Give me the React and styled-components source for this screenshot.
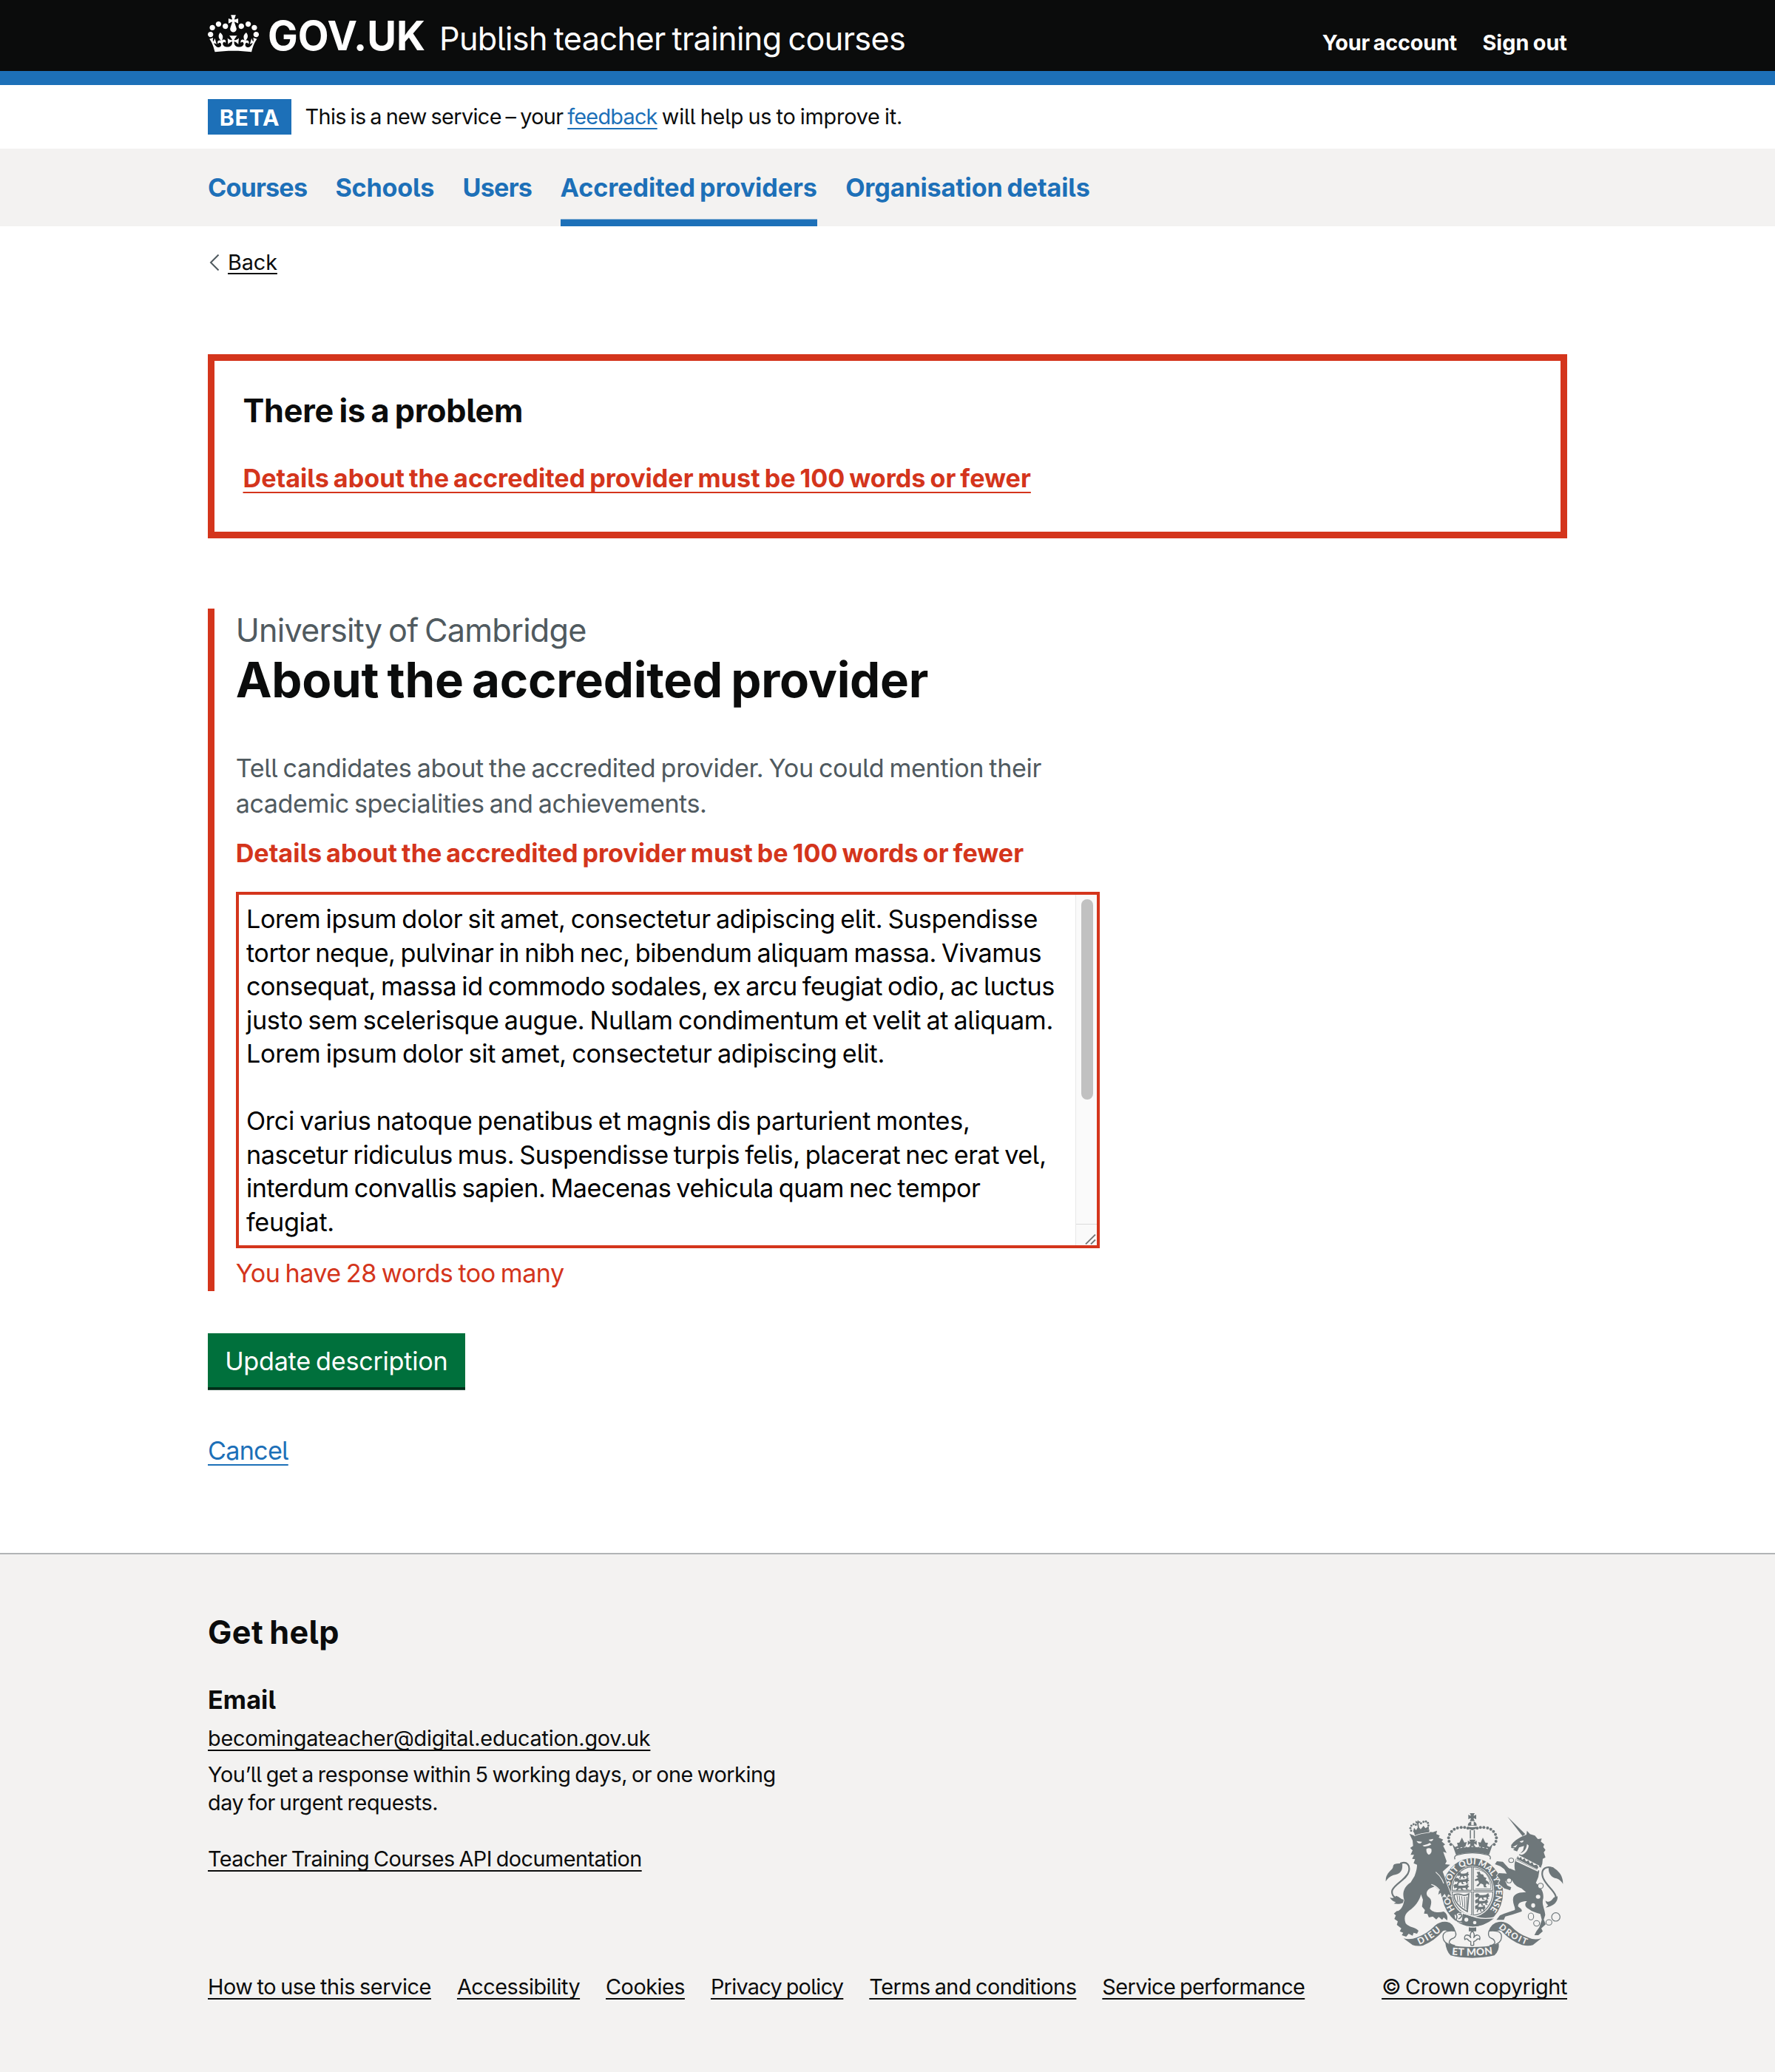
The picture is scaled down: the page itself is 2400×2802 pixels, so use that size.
import React from "react";
import styled, { createGlobalStyle, css } from "styled-components";

const colour = {
  ink: "#0b0c0c",
  blue: "#1d70b8",
  red: "#d4351c",
  green: "#00703c",
  greenShadow: "#002d18",
  secondary: "#505a5f",
  panel: "#f3f2f1",
  rule: "#b1b4b6",
  crest: "#6e777a",
};

const GlobalStyle = createGlobalStyle`
  *, *::before, *::after { box-sizing: border-box; }
  body {
    margin: 0;
    background: #fff;
    color: ${colour.ink};
    font-family: Inter, Roboto, "Liberation Sans", sans-serif;
    font-feature-settings: "cv05";
    -webkit-font-smoothing: antialiased;
  }
  h1, h2, h3, p, ul { margin: 0; padding: 0; }
`;

/* Letter spacing, in px, set per piece of text */
const tracked = css`
  letter-spacing: ${(p) => p.$track || 0}px;
  word-spacing: -0.06em;
  white-space: nowrap;
`;

const Container = styled.div`
  width: 1838px;
  margin: 0 auto;
`;

/* ---------- Header ---------- */
const HeaderBar = styled.header`
  height: 115px;
  background: ${colour.ink};
  border-bottom: 19px solid ${colour.blue};
  color: #fff;
`;
const HeaderRow = styled(Container)`
  display: flex;
  align-items: flex-start;
`;
const Crown = styled.svg`
  width: 69px;
  height: 51px;
  margin-top: 20px;
  flex: none;
`;
const LogoText = styled.span`
  ${tracked}
  width: 214px;
  margin: 18px 0 0 12px;
  font-size: 54.3px;
  line-height: 60px;
  font-weight: 700;
`;
const ServiceName = styled.span`
  ${tracked}
  margin: 24px 0 0 18px;
  font-size: 43.2px;
  line-height: 57px;
`;
const AccountNav = styled.nav`
  display: flex;
  gap: 34.5px;
  margin: 38px 0 0 auto;
`;
const AccountLink = styled.a`
  ${tracked}
  font-size: 28.8px;
  line-height: 39px;
  font-weight: 700;
`;

/* ---------- Phase banner ---------- */
const Phase = styled(Container)`
  display: flex;
  height: 86px;
  padding-top: 19px;
`;
const Tag = styled.strong`
  ${tracked}
  width: 113px;
  height: 48px;
  padding-top: 1px;
  margin-right: 18.5px;
  background: ${colour.blue};
  color: #fff;
  font-size: 30.2px;
  line-height: 48px;
  text-align: center;
`;
const PhaseText = styled.p`
  font-size: 28.8px;
  line-height: 48px;
`;
const Phrase = styled.span`
  ${tracked}
`;

/* ---------- Links ---------- */
const Link = styled.a`
  color: ${(p) => p.$tone || colour.ink};
  text-decoration: underline;
  text-decoration-thickness: 2px;
  text-underline-offset: ${(p) => p.$drop || 5}px;
  text-decoration-skip-ink: none;
`;

/* ---------- Primary navigation ---------- */
const NavBar = styled.nav`
  background: ${colour.panel};
`;
const NavList = styled(Container)`
  display: flex;
  gap: 38.3px;
`;
const NavItem = styled.a`
  ${tracked}
  height: 105px;
  color: ${colour.blue};
  font-size: 34.2px;
  line-height: 105px;
  font-weight: 700;
  box-shadow: ${(p) => (p.$current ? `inset 0 -9.5px 0 ${colour.blue}` : "none")};
`;

/* ---------- Main ---------- */
const BackRow = styled.div`
  display: flex;
  align-items: center;
  height: 40px;
  margin-top: 28.5px;
`;
const Chevron = styled.svg`
  width: 14px;
  height: 24px;
  margin: 1px 11.5px 0 1.5px;
`;
const BackLink = styled(Link)`
  ${tracked}
  font-size: 28.8px;
  line-height: 40px;
`;
const ErrorSummary = styled.section`
  height: 249px;
  margin-top: 104.5px;
  padding: 38px 38.5px 0;
  border: 9.6px solid ${colour.red};
`;
const SummaryTitle = styled.h2`
  ${tracked}
  font-size: 43.2px;
  line-height: 58px;
`;
const SummaryItem = styled.p`
  ${tracked}
  margin-top: 38.7px;
  font-size: 34.2px;
  line-height: 48px;
  font-weight: 700;
`;
const FormGroup = styled.div`
  height: 922.5px;
  margin-top: 95.3px;
  padding: 1px 0 0 28.7px;
  border-left: 9.6px solid ${colour.red};
`;
const Caption = styled.span`
  ${tracked}
  display: block;
  color: ${colour.secondary};
  font-size: 43.2px;
  line-height: 57px;
`;
const Title = styled.h1`
  ${tracked}
  font-size: 65.4px;
  line-height: 77px;
`;
const Hint = styled.div`
  margin-top: 57px;
  color: ${colour.secondary};
  font-size: 34.2px;
  line-height: 48px;
`;
const Line = styled.div`
  ${tracked}
  min-height: 1lh;
`;
const ErrorMessage = styled.p`
  ${tracked}
  margin-top: 18.3px;
  color: ${colour.red};
  font-size: 34.2px;
  line-height: 48px;
  font-weight: 700;
`;
const TextBox = styled.div`
  display: flex;
  justify-content: space-between;
  width: 1168px;
  height: 482px;
  margin-top: 28.8px;
  border: 4px solid ${colour.red};
`;
const TextContent = styled.div`
  padding: 10px 0 0 10.3px;
  color: #000;
  font-size: 34.2px;
  line-height: 45.5px;
`;
const Track = styled.div`
  display: flex;
  flex-direction: column;
  justify-content: space-between;
  width: 29px;
  background: #fafafa;
  border-left: 1.5px solid #e8e8e8;
`;
const Thumb = styled.div`
  width: 16px;
  height: 271px;
  margin: 5.5px 0 0 7px;
  border-radius: 8px;
  background: #c1c1c1;
`;
const Corner = styled.div`
  height: 29px;
  padding: 13px 0 0 12px;
  border-top: 1.5px solid #dcdcdc;
  line-height: 0;
`;
const WordCount = styled.p`
  ${tracked}
  margin-top: 10px;
  color: ${colour.red};
  font-size: 34.2px;
  line-height: 48px;
`;
const Button = styled.button`
  ${tracked}
  display: block;
  width: 347.5px;
  height: 73px;
  margin: 57.4px 0 62px;
  padding: 2px 0 0;
  border: 0;
  background: ${colour.green};
  box-shadow: 0 3.8px 0 ${colour.greenShadow};
  color: #fff;
  font-family: inherit;
  font-feature-settings: inherit;
  font-size: 34.2px;
  line-height: 71px;
`;
const CancelLink = styled(Link)`
  ${tracked}
  display: block;
  width: max-content;
  font-size: 34.2px;
  line-height: 48px;
`;

/* ---------- Footer ---------- */
const FooterBar = styled.footer`
  height: 702px;
  margin-top: 114px;
  padding-top: 76.5px;
  background: ${colour.panel};
  border-top: 2px solid ${colour.rule};
`;
const FooterRow = styled(Container)`
  display: flex;
  justify-content: space-between;
  align-items: flex-end;
  font-size: 28.8px;
  line-height: 38.3px;
`;
const FooterTitle = styled.h2`
  ${tracked}
  font-size: 43.2px;
  line-height: 57px;
`;
const FooterSubtitle = styled.h3`
  ${tracked}
  margin: 39px 0 9.3px;
  font-size: 34.2px;
  line-height: 48px;
`;
const Response = styled.div`
  margin: 10.3px 0 38px;
`;
const FooterLinks = styled.div`
  display: flex;
  gap: 35px;
  margin-top: 134.5px;
`;
const Copyright = styled.div`
  display: flex;
  flex-direction: column;
  align-items: flex-end;
`;
const Crest = styled.svg`
  width: 250px;
  height: 203.33px;
  margin: 0 -1px 16.5px 0;
`;

const CrownMark = () => (
  <Crown viewBox="0 0 132 97" fill="#fff" aria-hidden="true">
    <path
      fillRule="evenodd"
      d="M25 30.2c3.5 1.5 7.7-.2 9.1-3.7 1.5-3.6-.2-7.8-3.9-9.2-3.6-1.4-7.6.3-9.1 3.9-1.4 3.5.3 7.5 3.9 9zM9 39.5c3.6 1.5 7.8-.2 9.2-3.7 1.5-3.6-.2-7.8-3.9-9.1-3.6-1.5-7.6.2-9.1 3.8-1.4 3.5.3 7.5 3.8 9zM4.4 57.2c3.5 1.5 7.7-.2 9.1-3.8 1.5-3.6-.2-7.7-3.9-9.1-3.5-1.5-7.6.3-9.1 3.8-1.4 3.5.3 7.6 3.9 9.1zm38.3-21.4c3.5 1.5 7.7-.2 9.1-3.8 1.5-3.6-.2-7.7-3.9-9.1-3.6-1.5-7.6.3-9.1 3.8-1.3 3.6.4 7.7 3.9 9.1zm64.4-5.6c-3.6 1.5-7.8-.2-9.1-3.7-1.5-3.6.2-7.8 3.8-9.2 3.6-1.4 7.7.3 9.2 3.9 1.3 3.5-.4 7.5-3.9 9zm15.9 9.3c-3.6 1.5-7.7-.2-9.1-3.7-1.5-3.6.2-7.8 3.7-9.1 3.6-1.5 7.7.2 9.2 3.8 1.5 3.5-.3 7.5-3.8 9zm4.7 17.7c-3.6 1.5-7.8-.2-9.2-3.8-1.5-3.6.2-7.7 3.9-9.1 3.6-1.5 7.7.3 9.2 3.8 1.3 3.5-.4 7.6-3.9 9.1zM89.3 35.8c-3.6 1.5-7.8-.2-9.2-3.8-1.4-3.6.2-7.7 3.9-9.1 3.6-1.5 7.7.3 9.2 3.8 1.4 3.6-.3 7.7-3.9 9.1zM69.7 17.7l8.9 4.7V9.3l-8.9 2.8c-.2-.3-.5-.6-.9-.9L72.4 0H59.6l3.5 11.2c-.3.3-.6.5-.9.9l-8.8-2.8v13.1l8.8-4.7c.3.3.6.7.9.9l-5 15.4v.1c-.2.8-.4 1.6-.4 2.4 0 4.1 3.1 7.5 7 8.1h.2c.3 0 .7.1 1 .1.4 0 .7 0 1-.1h.2c4-.6 7.1-4.1 7.1-8.1 0-.8-.1-1.7-.4-2.4V34l-5.1-15.4c.4-.2.7-.6 1-.9zM66 92.8c16.9 0 32.8 1.1 47.1 3.2 4-16.9 8.9-26.7 14-33.5l-9.6-3.4c1 4.9 1.1 7.2 0 10.2-1.5-1.4-3-4.3-4.2-8.7L108.6 76c2.8-2 5-3.2 7.5-3.3-4.4 9.4-10 11.9-13.6 11.2-4.3-.8-6.3-4.6-5.6-7.9 1-4.7 5.7-5.9 8-.5 4.3-8.7-3-11.4-7.6-8.8 7.1-7.2 7.9-13.5 2.1-21.1-8 6.1-8.1 12.3-4.5 20.8-4.7-5.4-12.1-2.5-9.5 6.2 3.4-5.2 7.9-2 7.2 3.1-.6 4.3-6.4 7.8-13.5 7.2-10.3-.9-10.9-8-11.2-13.8 2.5-.5 7.1 1.8 11 7.3L80.2 60c-4.1 4.4-8 5.3-12.3 5.4 1.4-4.4 8-11.6 8-11.6H55.5s6.4 7.2 7.9 11.6c-4.2-.1-8-1-12.3-5.4l1.4 16.4c3.9-5.5 8.5-7.7 10.9-7.3-.3 5.8-.9 12.8-11.1 13.8-7.2.6-12.9-2.9-13.5-7.2-.7-5 3.8-8.3 7.1-3.1 2.7-8.7-4.6-11.6-9.4-6.2 3.7-8.5 3.6-14.7-4.6-20.8-5.8 7.6-5 13.9 2.2 21.1-4.7-2.6-11.9.1-7.7 8.8 2.3-5.5 7.1-4.2 8.1.5.7 3.3-1.3 7.1-5.7 7.9-3.5.7-9-1.8-13.5-11.2 2.5.1 4.7 1.3 7.5 3.3l-4.7-15.4c-1.2 4.4-2.7 7.2-4.3 8.7-1.1-3-.9-5.3 0-10.2l-9.5 3.4c5 6.9 9.9 16.7 14 33.5 14.8-2.1 30.8-3.2 47.7-3.2z"
    />
  </Crown>
);

const crownBeads = [
  [404, 128], [391, 125], [377, 125], [362, 127], [349, 132], [338, 141], [330, 153],
  [326, 167], [328, 181], [335, 194],
];

const lionCrownBeads = [
  [174, 138], [171, 128], [175, 118], [184, 112], [193, 114], [214, 108], [224, 102],
  [234, 101], [242, 107], [244, 117], [242, 127],
];

const PassantLion = ({ x, y, w = 66 }) => (
  <path
    transform={`translate(${x} ${y}) scale(${w / 66} 1)`}
    d="M0 6l8-5 8 2 4 5 14 0 12-1 8-6 6 3-4 3 6 5-6 4-2 6 6 1-2 2-9-1-2-7-12 1 1 6 5 1-1 2-9 0-3-8-7 1-5 6 3 3-8 0-1-4 5-7-5-2-7 3z"
  />
);

const RoyalCrest = () => {
  const g = colour.crest;
  const l = colour.panel;
  const cut = { stroke: l, strokeWidth: 5, paintOrder: "stroke", strokeLinejoin: "round" };
  return (
    <Crest viewBox="60 55 750 610" role="img" aria-label="Royal coat of arms">
      <defs>
        <path id="garter" d="M356 463A95 110 0 1 1 490 463" />
        <path id="dieu" d="M207 601Q262 578 304 536" />
        <path id="mon" d="M336 641Q422 650 512 638" />
        <path id="droit" d="M528 532Q580 580 645 602" />
      </defs>

      {/* Garter and shield */}
      <ellipse cx="423" cy="388" rx="124" ry="139" fill={g} />
      <ellipse cx="423" cy="384" rx="88" ry="103" fill={l} />
      <ellipse cx="423" cy="383" rx="83" ry="98" fill="none" stroke={g} strokeWidth="3.5" />
      <text fill={l} fontFamily="Lato, sans-serif" fontWeight="900" fontSize="35">
        <textPath href="#garter" startOffset="6" textLength="480" lengthAdjust="spacingAndGlyphs">HONI SOIT QUI MAL Y PENSE</textPath>
      </text>
      <path d="M423 285V481M339 383H507" stroke={g} strokeWidth="10" />
      <path d="M423 285V481M339 383H507" stroke={l} strokeWidth="3" />
      <g fill={g}>
        <PassantLion x={362} y={304} w={50} />
        <PassantLion x={350} y={328} w={64} />
        <PassantLion x={346} y={353} w={68} />
        <PassantLion x={433} y={391} w={64} />
        <PassantLion x={433} y={415} w={58} />
        <PassantLion x={433} y={439} w={46} />
        <path d="M440 306L452 304L456 314L466 316L470 326L480 330L476 338L488 346L492 358L480 352L476 360L482 368H470L466 356L456 352L446 364L438 362L450 350L446 340L434 342L432 336L446 330L438 322L446 318z" />
      </g>
      <g fill="none" stroke={g}>
        <path d="M434 374H498Q498 340 478 312Q460 296 434 294" strokeWidth="2.5" />
        <path d="M348 398Q350 440 402 466L408 394Q392 404 378 398Q364 392 348 398z" strokeWidth="5" />
        <path d="M360 400L364 428M369 401L374 440M379 404L384 448M390 406L392 454M400 406L399 458" strokeWidth="3" />
      </g>
      {/* Buckle and belt end */}
      <path d="M350 480L376 464L402 480L386 514L356 508z" fill={l} />
      <path d="M378 472Q362 464 356 478Q364 486 356 500Q366 512 382 504M366 478Q378 474 380 484Q376 492 366 496" fill="none" stroke={g} strokeWidth="5" />
      <path d="M384 474L440 492Q470 500 510 494Q470 527 423 527L378 512z" fill={g} />
      <path d="M384 472L440 490Q474 498 514 490" fill="none" stroke={l} strokeWidth="4" />
      <circle cx="398" cy="499" r="8" fill={l} />
      <circle cx="432" cy="511" r="7" fill={l} />
      <path d="M408 530Q423 533 438 530V546H408z" fill={g} />
      <path
        d="M422 544Q410 558 416 572Q408 558 396 562Q388 568 392 580Q400 572 408 584L416 588L416 602Q422 606 428 602L428 588L436 584Q446 572 452 580Q456 566 446 562Q436 558 428 572Q434 558 422 544z"
        fill={l} stroke={g} strokeWidth="4" strokeLinejoin="round"
      />

      {/* Tails */}
      <g fill="none" stroke={g} strokeWidth="6.5" strokeLinecap="round">
        <path d="M132 270C158 262 170 278 165 302C158 334 112 350 98 378C92 396 104 410 118 414" />
        <path d="M748 290C722 280 703 292 706 318C710 352 752 376 760 402C762 414 757 420 752 426" />
      </g>
      <g fill={g}>
        <path d="M71 344C70 318 84 306 96 294C104 286 98 280 106 274C116 270 128 270 138 272C140 292 136 310 112 316C96 318 80 328 71 344z" />
        <path d="M88 409C98 414 106 410 113 402L122 406C132 414 142 420 154 418C144 434 126 438 104 434L112 428C102 426 94 420 88 409z" />
        <path d="M790 354C790 322 776 304 752 288C746 284 738 286 732 290C730 310 742 328 764 332C776 336 784 344 790 354z" />
        <path d="M768 404C770 428 752 444 720 450L730 440C724 436 720 430 719 422C732 432 742 424 752 410z" />
      </g>

      {/* Lion */}
      <path
        {...cut}
        fill={g}
        d="M167 150L186 158C206 146 240 142 262 144L279 138L276 152L290 158L286 166L304 174L298 182L312 194L304 200L318 228L304 224L318 262L312 274L332 276L322 286L302 304L310 326L318 352L328 378L338 404L324 396L320 412L310 394L298 408L294 390L284 398L288 380L270 364L250 372C232 384 234 400 246 408C262 420 254 440 250 454C260 470 284 472 306 466C318 472 324 486 320 502L306 490L300 500L286 488L276 498L262 486L246 490L240 476L226 474L230 460L218 446L222 418L214 396C208 422 190 446 166 462C148 476 144 492 152 514C168 532 190 528 204 544L198 556L184 552L180 564L164 556L154 568L136 562L142 552L128 546L134 534L116 520L120 506L106 496L112 482L104 474L116 464C130 464 142 446 146 420C136 390 146 364 172 348L188 322C196 300 198 288 198 276L184 270L190 254L178 252L186 236L172 236L180 218L170 208L182 200L180 178z"
      />
      <g fill={l}>
        <path d="M196 180L218 183C213 193 201 191 196 180z" />
        <path d="M245 175L264 171C262 181 252 184 245 175z" />
        <path d="M220 198Q238 196 250 188L256 194Q242 204 226 202z" />
        <path d="M236 212Q246 206 256 212Q260 230 246 236Q234 230 236 212z" />
      </g>
      <path d="M274 306Q298 326 306 352M256 356Q276 362 290 380" fill="none" stroke={l} strokeWidth="3.5" />
      {/* Lion's crown */}
      <path d="M186 145L248 133L247 144Q214 147 189 157z" fill={g} stroke={l} strokeWidth="5" paintOrder="stroke" />
      <g fill={g}>
        {lionCrownBeads.map(([x, y]) => (
          <circle key={`${x}-${y}`} cx={x} cy={y} r="4.4" />
        ))}
        <path d="M192 98L199 102L201 95L206 101L212 100L209 106L204 108L206 124L202 130L198 108L192 106z" />
        <path d="M182 142L186 126L194 136L203 122L213 132L224 118L232 128L244 122L246 134L188 148z" />
      </g>

      {/* Unicorn */}
      <g fill={g} {...cut}>
        <path d="M604 244C594 260 590 280 596 300L568 288L546 264L522 262L514 274L536 282L552 294L562 312L530 310L522 320L536 338L528 352L552 372L576 380L580 368L564 360L556 342L584 340C590 354 602 366 622 372L640 388C610 386 590 396 588 412C584 436 600 452 594 460L552 474L534 482L520 500H550L556 486L586 478L622 466C626 458 618 454 608 446C606 432 620 424 644 424C632 436 636 448 652 456C664 466 680 470 698 476L704 500L694 530L682 546L674 562H690L708 546L702 534L720 518L712 498L718 480C716 454 702 436 710 412C712 392 706 372 680 350L690 326L694 300z" />
      </g>
      <g fill={g}>
        <path d="M565 81L637 152L626 160z" />
        <path d="M580 196C590 180 606 170 622 162L642 154L644 138L656 152L676 158L688 172L704 170L700 182L714 194L710 204L719 216L712 226L719 246L708 252L706 272L700 288L610 238L628 218L632 200L612 206L604 222L588 216L594 210L580 208z" />
      </g>
      <g fill={l}>
        <path d="M614 182L630 177C630 187 619 189 614 182z" />
        <path d="M644 192L651 198C648 220 634 236 618 236L612 230C632 228 642 212 644 192z" />
        <path d="M586 204L606 194L598 206z" />
        <path d="M606 234L694 280L688 304L598 262z" />
      </g>
      <path d="M606 240L612 250L620 244L624 256L634 250L640 263L650 258L656 271L666 266L671 278L684 276L690 286L684 297L602 257z" fill={g} />
      <path d="M602 253L688 297" stroke={l} strokeWidth="2.5" />
      {/* Chain */}
      <g fill="none" stroke={g} strokeWidth="3.2">
        <ellipse cx="580" cy="258" rx="10" ry="9" fill={l} />
        <ellipse cx="571" cy="340" rx="10" ry="10" fill={l} />
        <ellipse cx="699" cy="362" rx="11" ry="11" fill={l} />
        <ellipse cx="660" cy="486" rx="11" ry="14" />
        <ellipse cx="683" cy="514" rx="12" ry="11" />
        <ellipse cx="733" cy="510" rx="12" ry="11" />
        <circle cx="761" cy="488" r="17" strokeWidth="3.6" />
      </g>
      <g fill={l}>
        <ellipse cx="576" cy="284" rx="7" ry="8" />
        <ellipse cx="689" cy="406" rx="9" ry="8" />
        <ellipse cx="669" cy="441" rx="8" ry="9" />
      </g>

      {/* Royal crown */}
      <g fill={g}>
        <path d="M412 67H432L427 77H431L438 73V92L431 88H427L432 99H412L417 88H413L406 92V73L413 77H417z" />
        <path d="M404 118Q404 104 418 101V116H428V101Q440 104 440 118z" />
        <path d="M404 122Q422 126 440 122Q438 134 422 136Q406 134 404 122z" />
        <rect x="412" y="136" width="4.5" height="34" />
        <rect x="428" y="136" width="4.5" height="34" />
        {crownBeads.map(([x, y]) => (
          <React.Fragment key={x + "-" + y}>
            <circle cx={x} cy={y} r="6" />
            <circle cx={846 - x} cy={y} r="6" />
          </React.Fragment>
        ))}
        <path d="M340 190L352 204L364 200L360 188L370 186L380 166L390 186L400 184L394 202L404 206L414 198V190L404 196V178L414 184L410 174H436L430 184L440 178V196L430 190V198L442 206L450 202L446 184L456 186L465 166L475 186L486 188L482 200L492 204L506 190L490 236Q422 218 356 236z" />
      </g>
      <path d="M359 211Q422 194 487 211" fill="none" stroke={l} strokeWidth="3" strokeDasharray="8 7" />
      <path d="M352 258Q346 240 360 236Q422 222 486 236Q500 240 494 258Q422 232 352 258z" fill={l} />
      <path d="M352 254Q346 242 360 237Q422 219 486 237Q500 242 494 254" fill="none" stroke={g} strokeWidth="4" />

      {/* Motto ribbon */}
      <g fill={g}>
        <path d="M143 575Q170 582 196 572Q240 556 270 524Q292 504 320 508Q344 512 354 546L328 552Q318 538 304 544Q270 584 222 604Q196 608 180 602z" />
        <path d="M703 574Q676 584 650 572Q606 556 578 524Q556 504 530 508Q500 512 488 546L514 552Q526 538 540 544Q576 584 624 602Q650 608 668 602z" />
        <path d="M312 588Q330 604 372 608Q422 612 474 608Q512 604 530 596Q532 626 512 644Q470 654 422 654Q370 654 334 644Q316 626 312 588z" />
      </g>
      <g fill={l} stroke={g} strokeWidth="4">
        <path d="M352 545Q362 566 346 574Q330 578 328 592Q336 602 352 604Q316 602 306 582Q298 560 312 550Q322 542 352 545z" />
        <path d="M490 545Q482 566 498 574Q512 578 514 592Q508 602 492 604Q528 602 538 582Q546 560 532 550Q520 542 490 545z" />
      </g>
      <g fill={l} fontFamily="Lato, sans-serif" fontWeight="900">
        <text fontSize="37"><textPath href="#dieu" textLength="106">DIEU</textPath></text>
        <text fontSize="41"><textPath href="#mon" startOffset="3" textLength="166">ET MON</textPath></text>
        <text fontSize="35"><textPath href="#droit" textLength="132">DROIT</textPath></text>
      </g>
    </Crest>
  );
};

const navItems = [
  { label: "Courses", track: -0.85 },
  { label: "Schools", track: -0.26 },
  { label: "Users", track: -0.75 },
  { label: "Accredited providers", track: -0.09, current: true },
  { label: "Organisation details", track: -0.17 },
];

const paragraphs = [
  ["Lorem ipsum dolor sit amet, consectetur adipiscing elit. Suspendisse", -0.35],
  ["tortor neque, pulvinar in nibh nec, bibendum aliquam massa. Vivamus", -0.47],
  ["consequat, massa id commodo sodales, ex arcu feugiat odio, ac luctus", -0.46],
  ["justo sem scelerisque augue. Nullam condimentum et velit at aliquam.", -0.31],
  ["Lorem ipsum dolor sit amet, consectetur adipiscing elit.", -0.3],
  ["", 0],
  ["Orci varius natoque penatibus et magnis dis parturient montes,", -0.32],
  ["nascetur ridiculus mus. Suspendisse turpis felis, placerat nec erat vel,", -0.46],
  ["interdum convallis sapien. Maecenas vehicula quam nec tempor", -0.5],
  ["feugiat.", -0.3],
];

const footerLinks = [
  ["How to use this service", -0.39],
  ["Accessibility", -0.5],
  ["Cookies", -0.5],
  ["Privacy policy", -0.7],
  ["Terms and conditions", -0.48],
  ["Service performance", -0.59],
];

export default function App() {
  return (
    <>
      <GlobalStyle />
      <HeaderBar>
        <HeaderRow>
          <CrownMark />
          <LogoText $track={0.1}>GOV.UK</LogoText>
          <ServiceName $track={-0.63}>Publish teacher training courses</ServiceName>
          <AccountNav>
            <AccountLink $track={-0.23}>Your account</AccountLink>
            <AccountLink $track={0.07}>Sign out</AccountLink>
          </AccountNav>
        </HeaderRow>
      </HeaderBar>

      <Phase>
        <Tag $track={0.8}>BETA</Tag>
        <PhaseText>
          <Phrase $track={-0.61}>This is a new service – your </Phrase>
          <Phrase $track={-0.74}><Link $tone={colour.blue}>feedback</Link></Phrase>
          <Phrase $track={-0.19}> will help us to improve it.</Phrase>
        </PhaseText>
      </Phase>

      <NavBar>
        <NavList>
          {navItems.map((item) => (
            <NavItem key={item.label} $track={item.track} $current={item.current}>
              {item.label}
            </NavItem>
          ))}
        </NavList>
      </NavBar>

      <Container as="main">
        <BackRow>
          <Chevron viewBox="0 0 14 24" fill="none" stroke={colour.secondary} strokeWidth="2">
            <path d="M12.5 1.5L2 12L12.5 22.5" />
          </Chevron>
          <BackLink $track={-0.1} $drop={4}>Back</BackLink>
        </BackRow>

        <ErrorSummary>
          <SummaryTitle $track={-0.22}>There is a problem</SummaryTitle>
          <SummaryItem $track={-0.03}>
            <Link $tone={colour.red} $drop={6}>
              Details about the accredited provider must be 100 words or fewer
            </Link>
          </SummaryItem>
        </ErrorSummary>

        <FormGroup>
          <Caption $track={-0.79}>University of Cambridge</Caption>
          <Title $track={-0.24}>About the accredited provider</Title>
          <Hint>
            <Line $track={-0.36}>Tell candidates about the accredited provider. You could mention their</Line>
            <Line $track={-0.46}>academic specialities and achievements.</Line>
          </Hint>
          <ErrorMessage $track={-0.03}>
            Details about the accredited provider must be 100 words or fewer
          </ErrorMessage>
          <TextBox>
            <TextContent>
              {paragraphs.map(([text, track], i) => (
                <Line key={i} $track={track}>{text}</Line>
              ))}
            </TextContent>
            <Track>
              <Thumb />
              <Corner>
                <svg width="15" height="14" viewBox="0 0 15 14" stroke="#757575" strokeWidth="1.8" fill="none">
                  <path d="M1 13.5L14 0.5M8 13.5L14 7.5" />
                </svg>
              </Corner>
            </Track>
          </TextBox>
          <WordCount $track={-0.52}>You have 28 words too many</WordCount>
        </FormGroup>

        <Button $track={-0.27}>Update description</Button>
        <CancelLink $tone={colour.blue} $track={-0.75} $drop={6}>Cancel</CancelLink>
      </Container>

      <FooterBar>
        <FooterRow>
          <div>
            <FooterTitle $track={0.4}>Get help</FooterTitle>
            <FooterSubtitle $track={0.1}>Email</FooterSubtitle>
            <Line $track={-0.23}><Link>becomingateacher@digital.education.gov.uk</Link></Line>
            <Response>
              <Line $track={-0.45}>You’ll get a response within 5 working days, or one working</Line>
              <Line $track={-0.42}>day for urgent requests.</Line>
            </Response>
            <Line $track={-0.53}><Link>Teacher Training Courses API documentation</Link></Line>
            <FooterLinks>
              {footerLinks.map(([label, track]) => (
                <Line key={label} $track={track}><Link>{label}</Link></Line>
              ))}
            </FooterLinks>
          </div>
          <Copyright>
            <RoyalCrest />
            <Line $track={-0.37}><Link>© Crown copyright</Link></Line>
          </Copyright>
        </FooterRow>
      </FooterBar>
    </>
  );
}
